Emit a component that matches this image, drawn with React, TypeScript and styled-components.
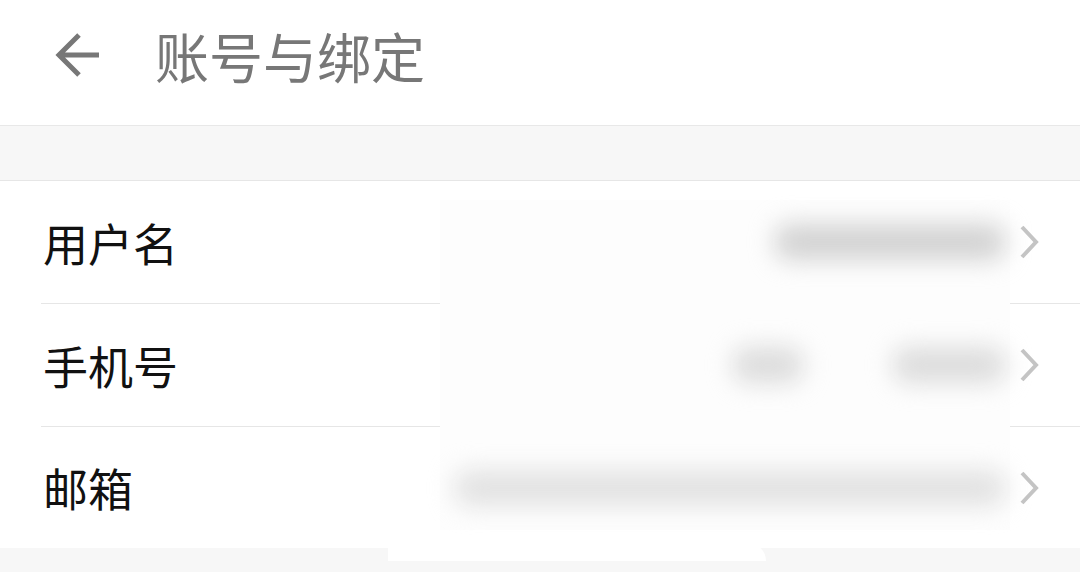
import React from 'react'
import styled, { createGlobalStyle } from 'styled-components'

const GlobalStyle = createGlobalStyle`
  html, body {
    margin: 0;
    padding: 0;
    background: #f7f7f7;
  }
  body {
    font-family: "Noto Sans CJK SC", "Noto Sans", sans-serif;
  }
`

const Page = styled.div`
  width: 1080px;
  height: 572px;
  overflow: hidden;
  display: flex;
  flex-direction: column;
  background: #f7f7f7;
`

const Header = styled.header`
  height: 126px;
  flex-shrink: 0;
  box-sizing: border-box;
  padding: 0 0 14px 55px;
  display: flex;
  align-items: center;
  background: #fff;
  border-bottom: 1px solid #e8e8e8;
`

const BackButton = styled.button`
  border: 0;
  padding: 0;
  background: none;
  display: flex;
  width: 46px;
  height: 46px;
`

const Title = styled.h1`
  margin: 0 0 0 54px;
  font-size: 54px;
  font-weight: 400;
  line-height: 1;
  color: #777;
`

const Spacer = styled.div`
  height: 54px;
  flex-shrink: 0;
  border-bottom: 1px solid #e6e6e6;
`

const List = styled.ul`
  position: relative;
  flex-shrink: 0;
  margin: 0;
  padding: 0;
  list-style: none;
  background: #fff;
`

const Row = styled.li`
  position: relative;
  height: 123px;
  box-sizing: border-box;
  margin-left: 41px;
  padding: 0 41px 0 2px;
  display: flex;
  align-items: center;
  border-bottom: 1px solid #e6e6e6;

  &:last-child {
    height: 121px;
    border-bottom: 0;
  }
`

const Label = styled.span`
  font-size: 45px;
  line-height: 1;
  color: #111;
`

const Value = styled.span`
  position: relative;
  z-index: 2;
  margin-left: auto;
  display: flex;
  align-items: center;
  gap: 90px;
`

const Blur = styled.span<{ $w: number; $tone: string }>`
  display: block;
  width: ${(p) => p.$w}px;
  height: 36px;
  border-radius: 14px;
  background: ${(p) => p.$tone};
  filter: blur(12px);
`

const Chevron = styled.svg`
  position: relative;
  z-index: 2;
  margin-left: 14px;
  width: 20px;
  height: 36px;
`

const Veil = styled.div`
  position: absolute;
  z-index: 1;
  left: 440px;
  top: 19px;
  width: 570px;
  height: 330px;
  background: #fdfdfd;
`

const Smudge = styled.div`
  position: absolute;
  z-index: 1;
  left: 388px;
  top: 362px;
  width: 378px;
  height: 18px;
  background: #fff;
  border-radius: 18px 60px 0 0;
`

type Item = { label: string; blobs: { w: number; tone: string }[] }

const items: Item[] = [
  { label: '用户名', blobs: [{ w: 230, tone: '#d2d2d2' }] },
  {
    label: '手机号',
    blobs: [
      { w: 70, tone: '#dcdcdc' },
      { w: 112, tone: '#dcdcdc' },
    ],
  },
  { label: '邮箱', blobs: [{ w: 550, tone: '#e2e2e2' }] },
]

export default function App() {
  return (
    <Page>
      <GlobalStyle />
      <Header>
        <BackButton aria-label="返回">
          <svg viewBox="0 0 46 46" width="46" height="46" fill="none">
            <path
              d="M44 22 H5 M24 2 L4 22 L24 42"
              stroke="#777"
              strokeWidth="5"
              strokeLinejoin="miter"
            />
          </svg>
        </BackButton>
        <Title>账号与绑定</Title>
      </Header>
      <Spacer />
      <List>
        <Veil />
        <Smudge />
        {items.map((item) => (
          <Row key={item.label}>
            <Label>{item.label}</Label>
            <Value>
              {item.blobs.map((b, i) => (
                <Blur key={i} $w={b.w} $tone={b.tone} />
              ))}
            </Value>
            <Chevron viewBox="0 0 20 36" fill="none">
              <path d="M3 3 L17 18 L3 33" stroke="#c4c4c4" strokeWidth="4" />
            </Chevron>
          </Row>
        ))}
      </List>
    </Page>
  )
}
